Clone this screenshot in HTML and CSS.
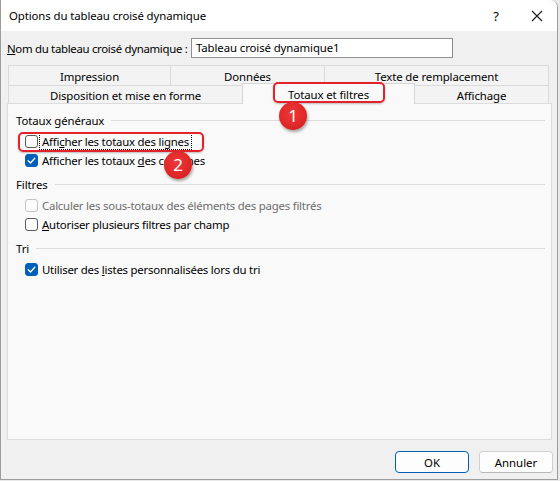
FILE: index.html
```html
<!DOCTYPE html>
<html lang="fr">
<head>
<meta charset="utf-8">
<title>Options du tableau croisé dynamique</title>
<link rel="stylesheet" href="styles.css">
</head>
<body>
<div class="window">
  <div class="titlebar">
    <span class="title">Options du tableau croisé dynamique</span>
    <span class="help">?</span>
    <span class="close"><svg width="12" height="12" viewBox="0 0 12 12"><path d="M1 1 L11 11 M11 1 L1 11" stroke="#1a1a1a" stroke-width="1.1" fill="none"/></svg></span>
  </div>
  <div class="client">
    <div class="name-row">
      <span class="label"><u>N</u>om du tableau croisé dynamique :</span>
      <div class="input">Tableau croisé dynamique1</div>
    </div>
    <div class="tabs">
      <div class="tab-row row1">
        <div class="tab">Impression</div>
        <div class="tab">Données</div>
        <div class="tab">Texte de remplacement</div>
      </div>
      <div class="tab-row row2">
        <div class="tab">Disposition et mise en forme</div>
        <div class="tab active">Totaux et filtres</div>
        <div class="tab">Affichage</div>
      </div>
    </div>
    <div class="panel">
      <div class="group first">
        <div class="group-head"><span>Totaux généraux</span><i class="rule"></i></div>
        <div class="check-row"><span class="box"></span><span class="text focus">Affi<u>c</u>her les totaux des lignes</span></div>
        <div class="check-row"><span class="box checked"><svg width="13" height="13" viewBox="0 0 13 13"><path d="M3.2 6.8 L5.5 9 L9.8 4.2" stroke="#fff" stroke-width="1.3" fill="none" stroke-linecap="round" stroke-linejoin="round"/></svg></span><span class="text">Afficher les totaux <u>d</u>es colonnes</span></div>
      </div>
      <div class="group">
        <div class="group-head"><span>Filtres</span><i class="rule"></i></div>
        <div class="check-row disabled"><span class="box"></span><span class="text">Calculer les sous-totaux des éléments des pages filtrés</span></div>
        <div class="check-row"><span class="box"></span><span class="text"><u>A</u>utoriser plusieurs filtres par champ</span></div>
      </div>
      <div class="group">
        <div class="group-head"><span>Tri</span><i class="rule"></i></div>
        <div class="check-row"><span class="box checked"><svg width="13" height="13" viewBox="0 0 13 13"><path d="M3.2 6.8 L5.5 9 L9.8 4.2" stroke="#fff" stroke-width="1.3" fill="none" stroke-linecap="round" stroke-linejoin="round"/></svg></span><span class="text">Utiliser des <u>l</u>istes personnalisées lors du tri</span></div>
      </div>
    </div>
    <div class="footer">
      <button class="btn primary">OK</button>
      <button class="btn">Annuler</button>
    </div>
  </div>
  <div class="hl hl-tab"></div>
  <div class="badge b1">1</div>
  <div class="hl hl-row"></div>
  <div class="badge b2">2</div>
</div>
</body>
</html>
```
FILE: styles.css
```css
* { box-sizing: border-box; }
html, body { margin: 0; padding: 0; }
body {
  background: #e9e9e9;
  font-family: "Segoe UI", "Noto Sans", sans-serif;
  font-size: 11.4px;
  letter-spacing: -0.1px;
  color: #000;
}
u { text-decoration: underline; text-underline-offset: 1px; }

.window {
  position: relative;
  width: 558px;
  height: 480px;
  background: #f0f0f0;
  border: 1px solid #9c9c9c;
  border-top: 0;
  border-top-right-radius: 8px;
  display: flex;
  flex-direction: column;
  overflow: hidden;
}

.titlebar {
  height: 31px;
  background: #ffffff;
  display: flex;
  align-items: center;
  padding-left: 8px;
  flex: none;
}
.title { flex: 1; }
.help { width: 20px; text-align: center; font-size: 13px; margin-right: 25px; }
.close { width: 12px; height: 12px; display: flex; margin-right: 14px; }

.client {
  flex: 1;
  display: flex;
  flex-direction: column;
}

.name-row {
  display: flex;
  align-items: center;
  margin-top: 7px;
  padding-left: 6px;
  height: 20px;
  white-space: nowrap;
}
.label { width: 184px; flex: none; letter-spacing: -0.3px; }
.input {
  width: 262px;
  height: 20px;
  background: #fff;
  border: 1px solid #8f8f8f;
  padding-left: 4px;
  line-height: 18px;
}

.tabs {
  margin-top: 7px;
  margin-left: 7px;
  width: 541px;
}
.tab-row { display: grid; }
.row1 { grid-template-columns: 163px 154px 224px; height: 20px; }
.row2 { grid-template-columns: 234px 173px 134px; height: 18px; }
.tab {
  border: 1px solid #dadada;
  border-bottom: 0;
  background: #f3f3f3;
  text-align: center;
  line-height: 21px;
  white-space: nowrap;
}
.row1 .tab + .tab { border-left: 0; }
.row2 .tab { line-height: 19px; }
.row2 .tab.active {
  position: relative;
  z-index: 1;
  margin-top: -2px;
  height: 21px;
  background: #f9f9f9;
  border-color: #d6d6d6;
  line-height: 22px;
}
.row2 .tab:first-child { border-right: 0; }
.row2 .tab:last-child { border-left: 0; }

.panel {
  margin-left: 6px;
  width: 545px;
  height: 337px;
  background: #f9f9f9;
  border: 1px solid #dcdcdc;
  padding: 6px 6px 0 8px;
  flex: none;
}
.group { margin-top: 4px; }
.group.first { margin-top: 0; }
.group-head {
  display: flex;
  align-items: center;
  height: 20px;
  margin-bottom: 2px;
}
.group-head .rule {
  flex: 1;
  height: 1px;
  background: #dcdcdc;
  margin-left: 7px;
}
.check-row {
  display: flex;
  align-items: center;
  height: 19px;
  padding-left: 9px;
  white-space: nowrap;
  letter-spacing: -0.22px;
}
.check-row:first-of-type { margin-top: 1px; }
.box {
  width: 13px;
  height: 13px;
  border: 1px solid #5a5a5a;
  border-radius: 3px;
  background: #fbfbfb;
  margin-right: 2px;
  display: flex;
  flex: none;
}
.box.checked { background: #005fb8; border-color: #005fb8; }
.box.checked svg { margin: -1px; }
.text { padding: 0 2px; line-height: 15px; }
.text.focus { outline: 1px dotted #000; outline-offset: 0; }
.disabled .text { color: #6d6d6d; }
.disabled .box { border-color: #c4c4c4; }

.footer {
  display: flex;
  justify-content: flex-end;
  gap: 10px;
  margin-top: 11px;
  padding-right: 4px;
}
.btn {
  font: inherit;
  width: 74px;
  height: 22px;
  background: #fdfdfd;
  border: 1px solid #d0d0d0;
  border-bottom-color: #b8b8b8;
  border-radius: 4px;
  color: #000;
  padding: 0;
}
.btn.primary { border: 1px solid #005fb8; }

.hl {
  position: absolute;
  z-index: 5;
  border: 2px solid #e4222c;
  border-radius: 5px;
  box-shadow: 0 1px 2px rgba(0,0,0,0.25);
}
.hl-tab { left: 272px; top: 82px; width: 112px; height: 21px; }
.hl-row { left: 17px; top: 132px; width: 186px; height: 20px; }

.badge {
  position: absolute;
  z-index: 6;
  width: 28px;
  height: 28px;
  border-radius: 50%;
  background: radial-gradient(circle at 45% 40%, #ee3a3a 0%, #e02828 55%, #c41c1c 100%);
  box-shadow: 1px 2px 3px rgba(0,0,0,0.35);
  color: #fff;
  font-size: 17px;
  letter-spacing: 0;
  text-align: center;
  line-height: 28px;
}
.b1 { left: 278px; top: 102px; }
.b2 { left: 163px; top: 151px; }
```
